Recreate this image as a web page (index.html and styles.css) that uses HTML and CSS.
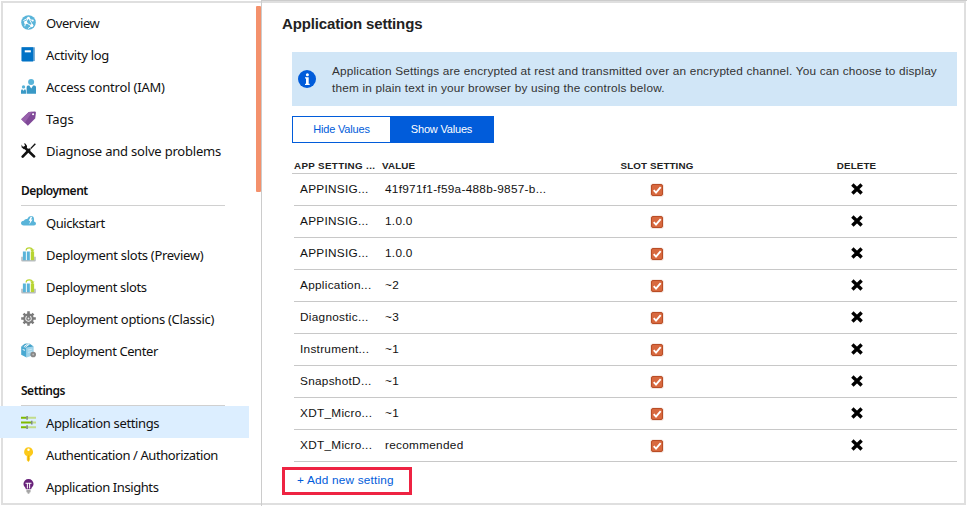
FILE: index.html
```html
<!DOCTYPE html>
<html lang="en">
<head>
<meta charset="utf-8">
<title>Application settings</title>
<link rel="stylesheet" href="styles.css">
</head>
<body>
<div class="app">
<nav class="side">
  <a class="item tightest"><svg class="ic" viewBox="0 0 16 16"><circle cx="8" cy="8" r="7.8" fill="#59b4d9"/><path d="M2.500 6 8 3l4.500 8-5 3.500M5 8l3-5 4 3M5 8l6 3.500M5 8l-1 4" fill="none" stroke="#fff" stroke-width="1"/><circle cx="8" cy="3.200" r="1.400" fill="#fff"/><circle cx="5" cy="8" r="1.800" fill="#fff"/><circle cx="11.500" cy="11.300" r="1.700" fill="#fff"/><circle cx="12.500" cy="5.800" r="1.100" fill="#fff"/></svg><span>Overview</span></a>
  <a class="item"><svg class="ic" viewBox="0 0 16 16"><path d="M1 .3h13.800V15H1z" fill="#68a5d3"/><path d="M.5.300h12.500v15.200H2Q.500 15.500.500 14z" fill="#0072c6"/><path d="M4 3.500h6.500v2.200H4z" fill="#fff"/></svg><span>Activity log</span></a>
  <a class="item loose"><svg class="ic" viewBox="0 0 16 16"><circle cx="10.800" cy="3.300" r="3.200" fill="#59b4d9"/><path d="M6 15.800V8.800q0-1.800 1.500-1.800h1.400l2 3 2-3h1.400q1.700 0 1.700 1.800v7z" fill="#3999c6"/><circle cx="2.700" cy="8.400" r="1.800" fill="#59b4d9"/><path d="M0 15.800v-3q0-1.900 1.300-1.900l1.300 1.600L4 10.900q1.300 0 1.300 1.900v3z" fill="#3999c6"/></svg><span>Access control (IAM)</span></a>
  <a class="item normal"><svg class="ic" viewBox="0 0 16 16"><path d="M.2 8.800 8.300 1.100 14.700.600q1.200 0 1.200 1.200l-.8 6.300-7.800 7.700z" fill="#804998"/><path d="M.2 8.800 8.300 1.100 12 .900 4.100 12.600z" fill="#9760ab"/><circle cx="12.900" cy="3.400" r="1.100" fill="#fff"/></svg><span>Tags</span></a>
  <a class="item loose"><svg class="ic" viewBox="0 0 16 16"><path d="M4 4.800 14 14.400" stroke="#111" stroke-width="2.600" stroke-linecap="round"/><path d="M.600 1.500v3l2.400 2.200 3-.7.500-2.800L4.600.400 3 .600l1.400 1.800-1 1.600-1.700-.3z" fill="#111"/><path d="m15.300.800-5 5.200" stroke="#111" stroke-width="1.500"/><path d="m8.800 7.200-7 7.300" stroke="#111" stroke-width="2.800" stroke-linecap="round"/></svg><span>Diagnose and solve problems</span></a>
  <h2 class="group">Deployment</h2>
  <a class="item tightest"><svg class="ic" viewBox="0 0 16 16"><path d="M3 11.300Q0 11.200 0 8.600 0 6.200 3 6q1-2.200 3.600-1.800Q8.200.900 11 1.100q2.700.1 2.900 3.400v2.400q2.100.4 2.100 2.200 0 2.200-2.200 2.200z" fill="#59b4d9"/><path d="M10.300 1.800 8.200 6.200h1.700L8.800 10l3.600-5.200h-1.700L12 1.800z" fill="#fff"/></svg><span>Quickstart</span></a>
  <a class="item"><svg class="ic" viewBox="0 0 16 16"><path d="M.2 10.500V14q0 1.500 1.200 1.500h13.200q1.200 0 1.200-1.500v-3.500H14v3.300H2v-3.300z" fill="#b8bdc1"/><path d="M2 4.700h3.200V14H2zm4.200 0h3.200V14H6.200z" fill="#59b4d9"/><path d="M10.400 4.700h3.600V14h-3.600z" fill="#b8d432"/><path d="M5.500 3.800Q5.500.900 8.800.900 12.200.900 12.200 4" fill="none" stroke="#b8d432" stroke-width="1.300"/><path d="m9.600 2.700 2.500 2.800L14.400 2.700z" fill="#b8d432"/></svg><span>Deployment slots (Preview)</span></a>
  <a class="item tight"><svg class="ic" viewBox="0 0 16 16"><path d="M.2 10.500V14q0 1.500 1.200 1.500h13.200q1.200 0 1.200-1.500v-3.500H14v3.300H2v-3.300z" fill="#b8bdc1"/><path d="M2 4.700h3.200V14H2zm4.200 0h3.200V14H6.200z" fill="#59b4d9"/><path d="M10.400 4.700h3.600V14h-3.600z" fill="#b8d432"/><path d="M5.500 3.800Q5.500.900 8.800.900 12.200.900 12.200 4" fill="none" stroke="#b8d432" stroke-width="1.300"/><path d="m9.600 2.700 2.500 2.800L14.400 2.700z" fill="#b8d432"/></svg><span>Deployment slots</span></a>
  <a class="item"><svg class="ic" viewBox="0 0 16 16"><path d="M8 .2v15.600M.2 8h15.600M2.700 2.700l10.600 10.600M13.300 2.700 2.700 13.300" stroke="#7a7a7a" stroke-width="2.700"/><circle cx="8" cy="8" r="5.600" fill="#7a7a7a"/><path d="M6.300 5.600a3 3 0 1 0 3.400 0" fill="none" stroke="#e4e4e4" stroke-width="1.200"/><circle cx="8" cy="8" r="1" fill="#e4e4e4"/></svg><span>Deployment options (Classic)</span></a>
  <a class="item tightest"><svg class="ic" viewBox="0 0 16 16"><path d="M.2 3.800 6 5v10.400L.2 12.400z" fill="#48a9d2"/><path d="M6 5l7.500-1.400v9.200L6 15.400z" fill="#9dd3ea"/><path d="M.2 3.800 4 .800 8.500.200 13.500 3.600 6 5z" fill="#48a5cc"/><path d="m3 4 4.500-3.200 1.500.4L4.700 4.400M1.800 7l2.500.8" stroke="#fff" fill="none"/><path d="M7.500 7.500 11.700 6.600M7.500 10l4-1" stroke="#c8e9f5"/><circle cx="13" cy="12.300" r="3" fill="#888"/><circle cx="13" cy="12.300" r="1" fill="#bbb"/></svg><span>Deployment Center</span></a>
  <h2 class="group">Settings</h2>
  <a class="item tight active"><svg class="ic" viewBox="0 0 16 16"><path d="M0 3h6M0 8h11M0 13h6" stroke="#7fba00" stroke-width="2.200"/><path d="M7 3h9M12 8h4M7 13h9" stroke="#c1dc8a" stroke-width="2.200"/><path d="M6.500 1v4M11.500 6v4M6.500 11v4" stroke="#7b8a80" stroke-width="1.600"/></svg><span>Application settings</span></a>
  <a class="item tightest"><svg class="ic" viewBox="0 0 16 16"><path d="M8 .2a5 5 0 0 1 2 9.500v.6l-.9.800.9.900-.9.900.6.800L8 15.900l-1.800-1.700V9.700A5 5 0 0 1 8 .2z" fill="#fcc91a"/><circle cx="8" cy="2.900" r="1.300" fill="#fff"/><path d="M8 9v5.500" stroke="#e2a800" stroke-width=".8"/></svg><span>Authentication / Authorization</span></a>
  <a class="item tightest"><svg class="ic" viewBox="0 0 16 16"><path d="M8 0a5.400 5.400 0 0 1 5.400 5.400c0 2.500-2.300 3.200-2.600 5.600H5.200C4.900 8.600 2.600 7.900 2.600 5.400A5.400 5.400 0 0 1 8 0z" fill="#68217a"/><path d="M6.800 10V5M9.200 10V5M4.800 4.600h6.400" stroke="#fff" stroke-width="1.100" fill="none"/><path d="M5.800 11.800h4.400v2.200h-.9l-.5 1.800H7.200L6.700 14h-.9z" fill="#a5a5a5"/></svg><span>Application Insights</span></a>
  <div class="scroll"></div>
</nav>
<main class="main">
  <h1 class="title">Application settings</h1>
  <div class="banner">
    <svg class="info" viewBox="0 0 18 18"><circle cx="9" cy="9" r="9" fill="#015cda"/><path d="M7 7.200h3.700v6.600h1V15H7v-1.200h1V8.400H7z" fill="#fff"/><circle cx="9.400" cy="4.700" r="1.500" fill="#fff"/></svg>
    <p>Application Settings are encrypted at rest and transmitted over an encrypted channel. You can choose to display<br>them in plain text in your browser by using the controls below.</p>
  </div>
  <div class="toggle"><button class="off">Hide Values</button><button class="on">Show Values</button></div>
  <div class="thead"><span class="first">APP SETTING ...</span><span>VALUE</span><span class="c">SLOT SETTING</span><span class="c">DELETE</span></div>
  <div class="rows" id="rows"></div>
  <a class="add">+ Add new setting</a>
</main>
</div>
<script src="rows.js"></script>
</body>
</html>
```
FILE: styles.css
```css
* { box-sizing: border-box; }
body { margin: 0; background: #fff; width: 967px; height: 506px; overflow: hidden; }
.app { position: relative; display: flex; height: 506px; }
.app::before { content: ""; box-sizing: border-box; position: absolute; left: 1px; top: 1px; width: 965px; height: 504px; border: 2px solid #dfdfdf; pointer-events: none; }
.side { position: relative; width: 262px; flex: none; border-right: 1px solid #ccc; padding-top: 6px; font-family: "Noto Sans", sans-serif; }
.item { display: flex; align-items: center; height: 32px; width: 249px; padding-left: 21px; gap: 10px; font-size: 13px; letter-spacing: -.29px; color: #111; white-space: nowrap; }
.item span { line-height: 18px; padding-top: 2px; }
.normal { letter-spacing: 0; }
.loose { letter-spacing: -.2px; }
.tight { letter-spacing: -.36px; }
.tightest { letter-spacing: -.42px; }
.ic { width: 15px; height: 15px; flex: none; margin-bottom: -1px; }
.active { background: #dceeff; }
.group { margin: 0 0 0 21px; width: 204px; height: 40px; border-bottom: 1px solid #d0d0d0; font-size: 12px; font-weight: 600; line-height: 18px; letter-spacing: -.48px; padding-top: 16px; color: #111; }
.scroll { position: absolute; left: 256px; top: 6px; width: 5px; height: 186px; background: #f4916c; border-radius: 1px; }
.main { flex: 1; border-top: 1px solid #ccc; font-family: "Liberation Sans", Arial, sans-serif; color: #222; }
.title { margin: 13px 0 0 20px; font-size: 15px; line-height: 20px; height: 38px; font-weight: 700; letter-spacing: -.15px; }
.banner { position: relative; display: flex; align-items: center; margin-left: 30px; width: 665px; height: 54px; background: #d1e6f7; padding-left: 6px; }
.info { width: 18px; height: 18px; flex: none; }
.banner p { margin: 0 0 0 16px; padding-top: 2px; font-size: 11.8px; line-height: 17px; letter-spacing: .18px; white-space: nowrap; color: #333; }
.toggle { display: flex; margin: 10px 0 0 30px; width: 202px; height: 27px; border: 1px solid #015cda; }
.toggle button { border: 0; padding: 0 0 1px; font: 11px "Liberation Sans", Arial, sans-serif; letter-spacing: -.18px; }
.off { width: 97px; background: #fff; color: #015cda; }
.on { flex: 1; background: #015cda; color: #fff; }
.thead { display: grid; grid-template-columns: 88px 186px 178px 221px; margin-left: 30px; width: 665px; height: 31px; border-bottom: 1px solid #c8c8c8; padding: 16px 0 0 2px; font-size: 9.8px; font-weight: 700; line-height: 14px; letter-spacing: .13px; color: #222; white-space: nowrap; }
.first { letter-spacing: .35px; }
.c { text-align: center; }
.rows { margin-left: 32px; width: 663px; }
.row { display: grid; grid-template-columns: 91px 183px 178px 221px; align-items: center; height: 32px; border-bottom: 1px solid #c8c8c8; font-size: 11.8px; letter-spacing: .28px; color: #111; white-space: nowrap; }
.row .name { padding-left: 6px; }
.row .text { padding-bottom: 2px; }
.row svg { display: block; margin: 0 auto; }
.check { width: 14px; height: 14px; }
.row .del { width: 12px; height: 12px; margin-top: -2px; }
.add { display: block; margin: 5px 0 0 20px; width: 130px; height: 28px; border: 3px solid #ee2342; padding-left: 12px; font-size: 11.8px; letter-spacing: .2px; line-height: 21px; color: #015cda; white-space: nowrap; }
```
FILE: rows.js
```js
const data = [
  ["APPINSIG...", "41f971f1-f59a-488b-9857-b..."],
  ["APPINSIG...", "1.0.0"],
  ["APPINSIG...", "1.0.0"],
  ["Application...", "~2"],
  ["Diagnostic...", "~3"],
  ["Instrument...", "~1"],
  ["SnapshotD...", "~1"],
  ["XDT_Micro...", "~1"],
  ["XDT_Micro...", "recommended"]
];
const check = '<svg class="check" viewBox="0 0 14 14"><rect x=".3" y=".5" width="13.4" height="13.300" rx="2.500" fill="#f0ddd5"/><rect x="1.500" y="1.500" width="11" height="11" rx="1.500" fill="#d8693f" stroke="#b94d26"/><path d="m3.700 7.200 2.300 2.400 4.700-5.400" fill="none" stroke="#fff" stroke-width="1.900"/></svg>';
const del = '<svg class="del" viewBox="0 0 12 12"><path d="m2.600 2.700 6.800 6.600M9.400 2.700 2.600 9.300" stroke="#000" stroke-width="3.400" stroke-linecap="square"/></svg>';
document.getElementById("rows").innerHTML = data.map(([n, v]) =>
  `<div class="row"><span class="name text">${n}</span><span class="text">${v}</span><span>${check}</span><span>${del}</span></div>`).join("");
```
